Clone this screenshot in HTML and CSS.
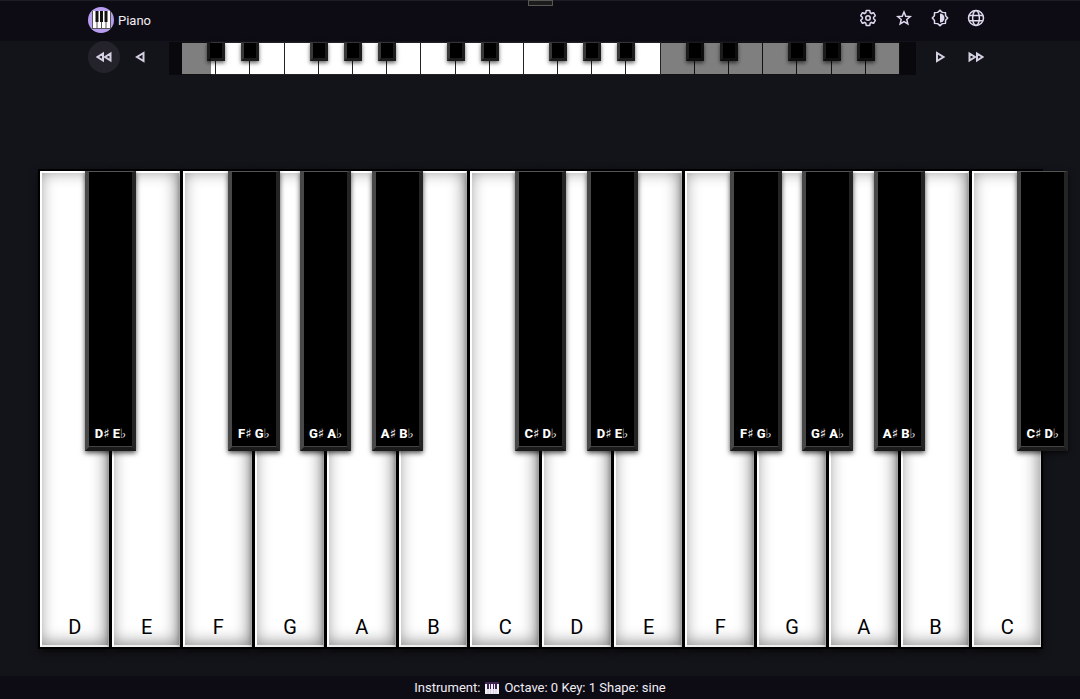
FILE: index.html
```
<!DOCTYPE html>
<html lang="en">
<head>
  <meta charset="UTF-8">
  <meta name="viewport" content="width=device-width, initial-scale=1.0">
  <title>Piano</title>
  <link rel="stylesheet" href="styles.css">
</head>
<body>

<header class="topbar">
  <button class="handle" aria-label="Toggle bar"></button>
  <div class="container">
    <a class="brand" href="#">
      <svg class="logo" viewBox="0 0 26 26" aria-hidden="true">
        <circle cx="13" cy="13" r="13" fill="#b79df0"/>
        <rect x="4" y="4" width="19" height="18" fill="#555"/>
        <path fill="#fff" d="M5 4h3.500v17H5zM9.500 4h3.500v17H9.500zM14 4h3.500v17H14zM18.500 4h3.500v17h-3.500z"/>
        <path fill="#111" d="M7.500 4h3v11h-3zM12 4h3v11h-3zM16.500 4h3v11h-3z"/>
      </svg>
      <span>Piano</span>
    </a>
    <div class="tools">
      <button class="tool" aria-label="Settings">
        <svg viewBox="0 0 24 24"><path d="M19.43 12.98c.04-.32.07-.64.07-.98s-.03-.66-.07-.98l2.11-1.65c.19-.15.24-.42.12-.64l-2-3.46a.5.5 0 0 0-.61-.22l-2.49 1a7.3 7.3 0 0 0-1.69-.98l-.38-2.65A.49.49 0 0 0 14 2h-4a.49.49 0 0 0-.49.42l-.38 2.65c-.61.25-1.17.59-1.69.98l-2.49-1a.5.5 0 0 0-.61.22l-2 3.46c-.13.22-.07.49.12.64l2.11 1.65c-.04.32-.07.65-.07.98s.03.66.07.98l-2.11 1.65c-.19.15-.24.42-.12.64l2 3.46c.12.22.39.3.61.22l2.49-1c.52.4 1.08.73 1.69.98l.38 2.65c.03.24.24.42.49.42h4c.25 0 .46-.18.49-.42l.38-2.65c.61-.25 1.17-.59 1.69-.98l2.49 1c.23.09.49 0 .61-.22l2-3.46a.5.5 0 0 0-.12-.64z" class="line"/><circle cx="12" cy="12" r="3" class="line"/></svg>
      </button>
      <button class="tool" aria-label="Favourites">
        <svg viewBox="0 0 24 24"><path class="line" d="M12 4l2.300 5.600 6 .5-4.600 3.900 1.400 5.900L12 16.700 6.900 19.900l1.400-5.900-4.600-3.900 6-.5z"/></svg>
      </button>
      <button class="tool" aria-label="Theme">
        <svg viewBox="0 0 24 24"><path class="line" d="M12 1.800l3 2.700 4.200.3.3 4.200 2.700 3-2.700 3-.3 4.200-4.200.3-3 2.700-3-2.700-4.200-.3-.3-4.200-2.700-3 2.700-3 .3-4.200 4.200-.3z"/><path d="M12 6a6 6 0 0 1 0 12z"/></svg>
      </button>
      <button class="tool" aria-label="Language">
        <svg viewBox="0 0 24 24"><g class="line"><circle cx="12" cy="12" r="10"/><ellipse cx="12" cy="12" rx="4.500" ry="10"/><path d="M3 8.500h18M3 15.500h18"/></g></svg>
      </button>
    </div>
  </div>
</header>

<nav class="container range">
  <div class="arrows">
    <button class="arrow active" aria-label="Octave down"><svg viewBox="0 0 16 16"><path d="M7 4.500v7L1.500 8zM14.500 4.500v7L9 8z"/></svg></button>
    <button class="arrow" aria-label="Key down"><svg viewBox="0 0 16 16"><path d="M11.500 4v8L5 8z"/></svg></button>
  </div>
  <div class="overview">
    <ul class="mini" id="mini"></ul>
  </div>
  <div class="arrows">
    <button class="arrow" aria-label="Key up"><svg viewBox="0 0 16 16"><path d="M5 4v8l6.500-4z"/></svg></button>
    <button class="arrow" aria-label="Octave up"><svg viewBox="0 0 16 16"><path d="M1.500 4.500v7L7 8zM9 4.500v7L14.500 8z"/></svg></button>
  </div>
</nav>

<main class="stage">
  <ul class="keyboard" id="keyboard"></ul>
</main>

<footer class="status">
  <span>Instrument:</span>
  <svg class="keys-icon" viewBox="0 0 14 12" aria-hidden="true">
    <rect width="14" height="12" fill="#f4eff6"/>
    <path fill="#3d2350" d="M0 0h14v2H0zM2 2h2v5H2zM5 2h1v5H5zM8 2h1v5H8zM10 2h2v5h-2z"/>
    <path stroke="#b9aec2" stroke-width=".5" d="M3 7v5M5.500 7v5M8.500 7v5M11 7v5"/>
  </svg>
  <span>Octave: 0 Key: 1 Shape: sine</span>
</footer>

<script>
  const notes = ['C', 'D', 'E', 'F', 'G', 'A', 'B'];
  const sharps = { C: 'C♯ D♭', D: 'D♯ E♭', F: 'F♯ G♭', G: 'G♯ A♭', A: 'A♯ B♭' };

  // playable keys, starting on D
  let html = '';
  for (let i = 1; i <= 14; i++) {
    const note = notes[i % 7];
    html += `<li><button class="white">${note}</button>`;
    if (sharps[note]) html += `<button class="black">${sharps[note]}</button>`;
    html += '</li>';
  }
  document.getElementById('keyboard').innerHTML = html;

  // overview of three octaves
  html = '';
  for (let i = 0; i < 21; i++) {
    html += `<li>${sharps[notes[i % 7]] ? '<i class="mini-black"></i>' : ''}</li>`;
  }
  html += '<li class="shade low"></li><li class="shade high"></li>';
  document.getElementById('mini').innerHTML = html;
</script>

</body>
</html>
```
FILE: styles.css
```
* {
  box-sizing: border-box;
}

body {
  margin: 0;
  min-height: 100vh;
  display: flex;
  flex-direction: column;
  overflow-x: hidden;
  background-color: #131419;
  color: #f1edf5;
  font-family: Roboto, "DejaVu Sans", sans-serif;
  font-size: 13px;
}

ul {
  list-style: none;
  margin: 0;
  padding: 0;
}

button {
  padding: 0;
  border: 0;
  background: none;
  color: inherit;
  font-family: inherit;
  cursor: pointer;
}

.container {
  width: 100%;
  max-width: 904px;
  margin: 0 auto;
  display: flex;
  justify-content: space-between;
}

.topbar {
  position: relative;
  height: 41px;
  background-color: #0d0b14;
  border-top: 1px solid #1d1d25;
}

.handle {
  position: absolute;
  top: -1px;
  left: 50%;
  width: 25px;
  height: 6px;
  margin-left: -12px;
  background: #1c1c1c;
  border: solid #555753;
  border-width: 0 1px 1px;
  box-shadow: inset 0 1px 0 #555753;
}

.brand {
  display: flex;
  align-items: center;
  gap: 4px;
  height: 38px;
  color: inherit;
  text-decoration: none;
}

.logo {
  width: 26px;
  height: 26px;
}

.tools {
  display: flex;
  gap: 4px;
  height: 34px;
}

.tool {
  width: 32px;
  display: flex;
  align-items: center;
  justify-content: center;
}

.tool svg {
  width: 18px;
  height: 18px;
  fill: #e0daf0;
}

.tool .line {
  fill: none;
  stroke: #e0daf0;
  stroke-width: 2;
}

.range {
  height: 35px;
}

.arrows {
  display: flex;
  gap: 4px;
}

.arrow {
  width: 32px;
  height: 32px;
  border-radius: 50%;
  display: flex;
  align-items: center;
  justify-content: center;
}

.arrow.active {
  background-color: #24232b;
}

.arrow svg {
  width: 16px;
  height: 16px;
  fill: none;
  stroke: #d5cfe2;
  stroke-width: 2;
}

.overview {
  flex: 1;
  margin: 1px 8px 0 13px;
  padding: 0 16px 0 13px;
  background-color: #08080d;
  border-bottom: 1px solid #131419;
}

.mini {
  position: relative;
  display: grid;
  grid-template-columns: repeat(21, 1fr);
  height: 33px;
}

.mini li {
  position: relative;
  background-color: #fff;
  border: solid #222;
  border-width: 1px 1px 1px 0;
}

.mini-black {
  position: absolute;
  z-index: 1;
  top: -1px;
  right: -10px;
  width: 18px;
  height: 19px;
  background-color: #000;
  border: 3px solid #1c1c1c;
  border-top: 1px solid #333;
  border-left-color: #383838;
  box-shadow: 0 2px 4px rgba(0, 0, 0, 0.6);
}

.mini .shade {
  position: absolute;
  z-index: 2;
  top: 0;
  bottom: 0;
  border: 0;
  background-color: rgba(0, 0, 0, 0.5);
}

.mini .low {
  left: 0;
  width: 4%;
}

.mini .high {
  right: 0;
  width: 33.3333%;
}

.stage {
  flex: 1;
  display: flex;
  padding: 95px 39px 29px 40px;
}

.keyboard {
  flex: 1;
  display: grid;
  grid-template-columns: repeat(14, 1fr);
  gap: 3px;
}

.keyboard li {
  position: relative;
  display: flex;
}

.white {
  flex: 1;
  display: flex;
  align-items: flex-end;
  justify-content: center;
  padding-bottom: 6px;
  background-color: #fff;
  border: 2px solid #fff;
  border-right: 1px solid #ccc;
  border-bottom-color: #eee;
  color: #000;
  font-size: 20px;
  line-height: 24px;
  box-shadow: 0 0 0 2px #000, 0 3px 8px #000,
    inset -2px -2px 16px rgba(0, 0, 0, 0.45);
}

.black {
  position: absolute;
  z-index: 1;
  top: 0;
  left: 65%;
  width: 75%;
  height: 58.8%;
  display: flex;
  align-items: flex-end;
  justify-content: center;
  padding-bottom: 5px;
  background-color: #000;
  border: solid #1c1c1c;
  border-width: 1px 4px 4px;
  border-color: #555 #242424 #1a1a1a #484848;
  box-shadow: 0 2px 5px rgba(0, 0, 0, 0.7), inset 0 -1px 0 #444;
  color: #fff;
  font-size: 13px;
  font-weight: 800;
  line-height: 16px;
  white-space: nowrap;
}

.status {
  height: 23px;
  display: flex;
  align-items: center;
  justify-content: center;
  gap: 5px;
  background-color: #0d0b14;
}

.keys-icon {
  width: 14px;
  height: 12px;
}
```
